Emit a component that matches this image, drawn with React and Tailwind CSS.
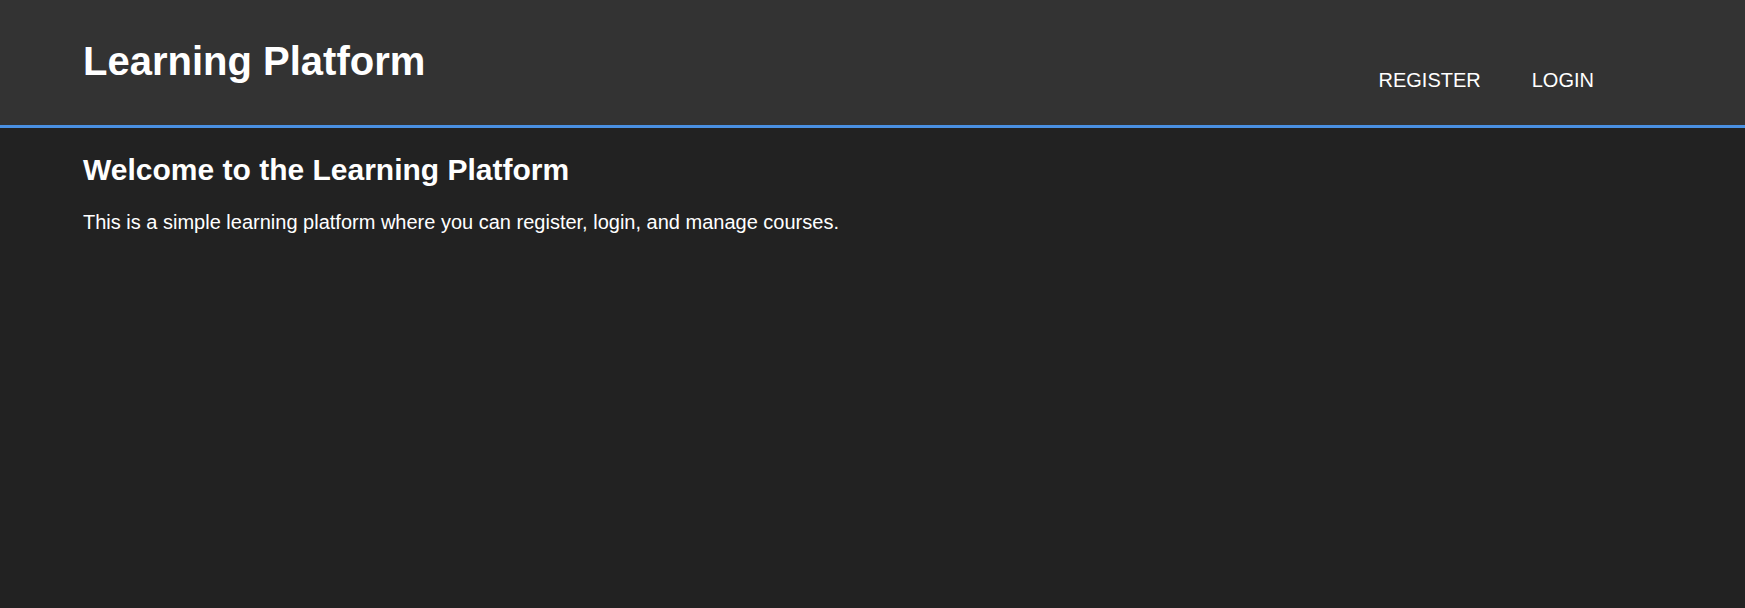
export default function App() {
    return (
        <div className="min-h-screen bg-[#222222] text-white font-['Liberation_Sans',Arial,sans-serif]">
            <header className="flex justify-between items-start h-[128px] bg-[#333333] border-b-[3px] border-[#4a90e2] pl-[83px] pr-[151px] pt-[38px]">
                <h1 className="text-[40px] leading-[1.15] font-bold">Learning Platform</h1>
                <nav className="flex gap-[51px] mt-[31px] text-[20px] leading-[1.15]">
                    <a href="#">REGISTER</a>
                    <a href="#">LOGIN</a>
                </nav>
            </header>
            <main className="px-[83px] pt-[25px]">
                <h2 className="text-[30px] leading-[1.15] font-bold">Welcome to the Learning Platform</h2>
                <p className="mt-[23px] text-[20px] leading-[1.15]">This is a simple learning platform where you can register, login, and manage courses.</p>
            </main>
        </div>
    );
}
